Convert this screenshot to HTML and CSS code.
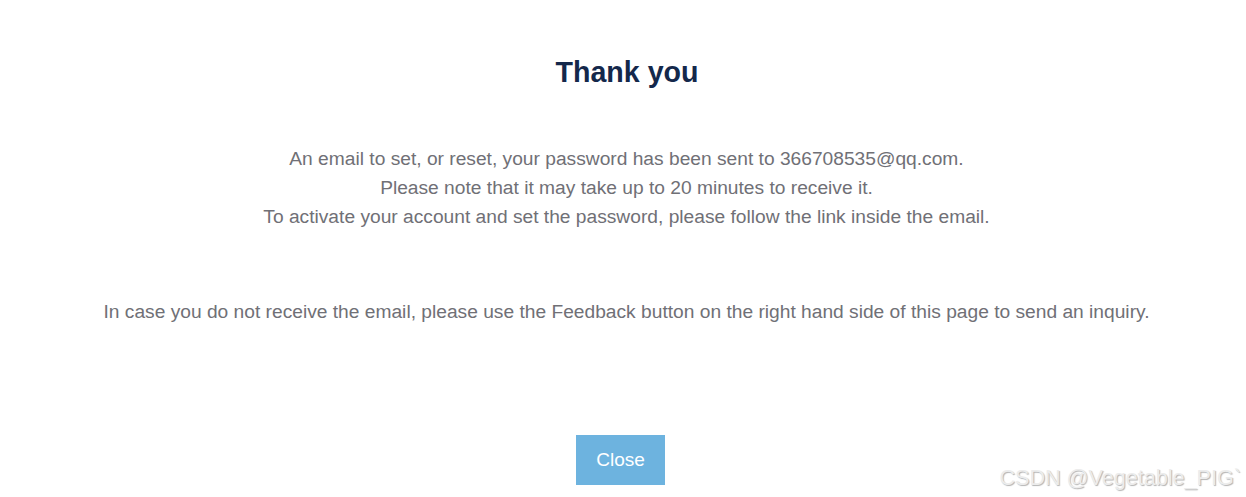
FILE: index.html
```html
<!DOCTYPE html>
<html>
<head>
<meta charset="utf-8">
<link rel="stylesheet" href="styles.css">
</head>
<body>
<main class="dialog">
  <h1 class="title">Thank you</h1>
  <div class="message">
    <p>An email to set, or reset, your password has been sent to 366708535@qq.com.</p>
    <p>Please note that it may take up to 20 minutes to receive it.</p>
    <p>To activate your account and set the password, please follow the link inside the email.</p>
  </div>
  <p class="note">In case you do not receive the email, please use the Feedback button on the right hand side of this page to send an inquiry.</p>
  <div class="actions">
    <button class="close-btn" type="button">Close</button>
  </div>
</main>
<div class="watermark">CSDN @Vegetable_PIG`</div>
</body>
</html>
```

FILE: styles.css
```css
html, body {
  margin: 0;
  padding: 0;
  background: #ffffff;
}
body {
  width: 1246px;
  height: 497px;
  overflow: hidden;
  position: relative;
  font-family: "Liberation Sans", Arial, sans-serif;
}
.dialog {
  display: flex;
  flex-direction: column;
  align-items: center;
  padding-top: 55px;
}
.title {
  margin: 0;
  font-size: 28.6px;
  line-height: 34px;
  font-weight: bold;
  color: #14284b;
  padding-left: 8px;
}
.message {
  margin-top: 55px;
  padding-left: 7px;
  text-align: center;
  color: #707076;
  font-size: 19.2px;
  line-height: 29px;
}
.message p {
  margin: 0;
}
.note {
  margin: 66px 0 0;
  padding-left: 7px;
  text-align: center;
  color: #707076;
  font-size: 19.2px;
  line-height: 29px;
}
.actions {
  margin-top: 109px;
  display: flex;
  justify-content: center;
  padding-right: 5px;
}
.close-btn {
  width: 89px;
  height: 50px;
  border: none;
  background: #6db3df;
  color: #ffffff;
  font-family: "Liberation Sans", Arial, sans-serif;
  font-size: 19px;
  padding: 0;
}
.watermark {
  position: absolute;
  right: 5px;
  bottom: 6px;
  font-family: "Liberation Sans", Arial, sans-serif;
  font-size: 21.6px;
  color: #ececec;
  text-shadow: 1px 1px 1px rgba(0, 0, 0, 0.3);
}
```
